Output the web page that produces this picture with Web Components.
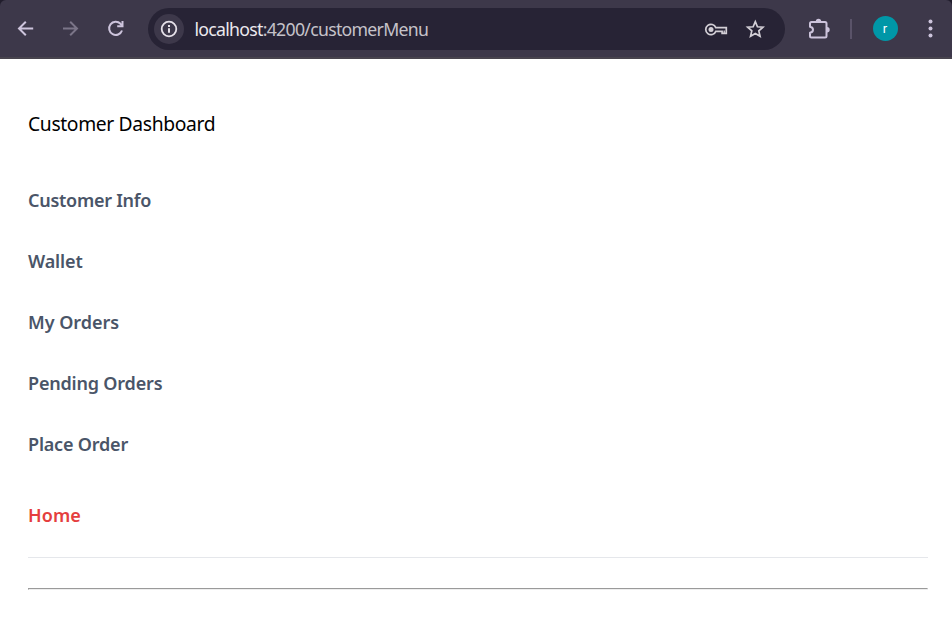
<!DOCTYPE html>
<html lang="en">
<head>
<meta charset="utf-8">
<title>Customer Dashboard</title>
<style>
html, body { margin: 0; height: 100%; background: #fff; }
body { font-family: "Noto Sans", "Open Sans", sans-serif; overflow: hidden; }
</style>
</head>
<body>
<browser-toolbar>
  <address-bar slot="address"><span>localhost</span><span slot="path">:4200/customerMenu</span></address-bar>
  <user-avatar slot="profile">r</user-avatar>
</browser-toolbar>
<customer-dashboard>
  <span slot="title">Customer Dashboard</span>
  <menu-link style="--ls:-.27px">Customer Info</menu-link>
  <menu-link style="--ls:-.12px">Wallet</menu-link>
  <menu-link style="--ls:-.03px">My Orders</menu-link>
  <menu-link style="--ls:-.19px">Pending Orders</menu-link>
  <menu-link style="--ls:-.19px">Place Order</menu-link>
  <menu-link slot="home" style="--ls:.12px;--color:#e53e3e">Home</menu-link>
</customer-dashboard>
<script>
const define = (name, markup) => customElements.define(name, class extends HTMLElement {
  constructor() {
    super();
    const t = document.createElement('template');
    t.innerHTML = markup;
    this.attachShadow({ mode: 'open' }).append(t.content.cloneNode(true));
  }
});

const icons = {
  back: ['#cdc4dc', '<path d="M17.200 9.500H3.500M9.800 2.700L3 9.500l6.800 6.800"/>'],
  forward: ['#7b7588', '<path d="M2 9.500h14M9.200 2.700L16 9.500l-6.800 6.800"/>'],
  reload: ['#cdc4dc', '<path d="M16 11.500A6.600 6.600 0 1 1 14.500 4.800L16 6.500"/><path d="M16.500 2v5.300h-5.300"/>'],
  info: ['#e6e1e9', '<circle cx="10" cy="10" r="7.300" stroke-width="1.800"/><path d="M10 9.200v4.600M10 6v1.900"/>'],
  key: ['#d3cfd6', '<path d="M12.800 8.600H23.300v5.700h-4.200V12.400h-6.300A5.200 5.200 0 1 1 12.800 8.600z" stroke-width="1.700"/><circle cx="8" cy="10.500" r="2.500" fill="#d3cfd6" stroke="none"/><path d="M21.200 11.500v2.500" stroke-width="1.400"/>', 25],
  star: ['#d3cfd6', '<path d="M10.300 2.700l2.150 5.100 5.500.45-4.150 3.650 1.250 5.400L10.300 14.450l-4.750 2.850 1.250-5.400-4.150-3.650 5.500-.45z" stroke-width="1.700" stroke-linejoin="miter"/>'],
  extension: ['#cdc4dc', '<path d="M3.500 4H17Q18.500 4 18.500 5.500V18Q18.500 19.500 17 19.500H3.500Q2 19.500 2 18V14.800C6 14.200 6 9.400 2 8.800V5.500Q2 4 3.500 4z" stroke-linejoin="round"/><path d="M7.800 3.500a2.700 2.700 0 0 1 5.400 0zM19 9a2.700 2.700 0 0 1 0 5.400z" fill="#cdc4dc" stroke="none"/>', 22, 22],
  more: ['#cdc4dc', '<g fill="#cdc4dc" stroke="none"><circle cx="10.500" cy="2.500" r="2"/><circle cx="10.500" cy="9.500" r="2"/><circle cx="10.500" cy="16.500" r="2"/></g>']
};
customElements.define('tool-icon', class extends HTMLElement {
  constructor() {
    super();
    const [color, shape, w = 20, h = 20] = icons[this.getAttribute('name')];
    this.attachShadow({ mode: 'open' }).innerHTML =
      `<style>:host{display:block;flex:none}svg{display:block}</style>
       <svg width="${w}" height="${h}" viewBox="0 0 ${w} ${h}" fill="none" stroke="${color}" stroke-width="2">${shape}</svg>`;
  }
});

define('address-bar', `<style>
:host{display:flex;align-items:center;box-sizing:border-box;height:42px;border-radius:21px;background:#272335;padding:0 20px 0 6px}
.site{width:30px;height:30px;border-radius:50%;background:#3d384a;display:grid;place-items:center}
.url{margin-left:10.500px;flex:1;font-size:17.700px;line-height:26px;letter-spacing:-.72px;color:#c5c2c9;white-space:nowrap}
.host{color:#ebe8ed}
tool-icon[name=star]{margin-left:17px}
</style>
<div class="site"><tool-icon name="info"></tool-icon></div>
<div class="url"><span class="host"><slot></slot></span><slot name="path"></slot></div>
<tool-icon name="key"></tool-icon><tool-icon name="star"></tool-icon>`);

define('user-avatar', `<style>
:host{display:grid;place-items:center;width:25px;height:25px;margin-bottom:1px;border-radius:50%;background:#0097a7;color:#fff;font:13px/22px Roboto,sans-serif}
</style><slot></slot>`);

define('browser-toolbar', `<style>
:host{display:block;background:#211d2c}
.bar{display:flex;align-items:center;box-sizing:border-box;height:59px;padding:1px 12px 0 16px;background:#3d384a;border-bottom:2px solid #48444e;border-radius:6px 6px 0 0}
.nav{display:flex;gap:25px;width:132px}
::slotted([slot=address]){width:637px}
tool-icon[name=extension]{margin-left:23px}
.divider{width:2px;height:20px;background:#5a5369;margin:0 20.500px 0 20.500px}
tool-icon[name=more]{margin-left:22.500px}
</style>
<div class="bar"><div class="nav"><tool-icon name="back"></tool-icon><tool-icon name="forward"></tool-icon><tool-icon name="reload"></tool-icon></div>
<slot name="address"></slot>
<tool-icon name="extension"></tool-icon><div class="divider"></div>
<slot name="profile"></slot><tool-icon name="more"></tool-icon></div>`);

define('menu-link', `<style>
:host{display:block;height:30px;font-size:18px;font-weight:600;line-height:30px;letter-spacing:var(--ls);color:var(--color,#4a5568);white-space:nowrap}
</style><slot></slot>`);

define('customer-dashboard', `<style>
:host{display:block;padding:50px 24px 0 28px}
h1{margin:0;font-size:19.300px;font-weight:400;line-height:30px;letter-spacing:-.36px;color:#000}
nav{display:grid;gap:31px;margin-top:46px}
.home{margin-top:41px;padding-bottom:27px;border-bottom:1px solid #e5e7eb}
hr{margin:30px 0 0;border:1px solid;border-color:#9a9a9a #eee #eee #9a9a9a}
</style>
<h1><slot name="title"></slot></h1><nav><slot></slot></nav>
<div class="home"><slot name="home"></slot></div><hr>`);
</script>
</body>
</html>
